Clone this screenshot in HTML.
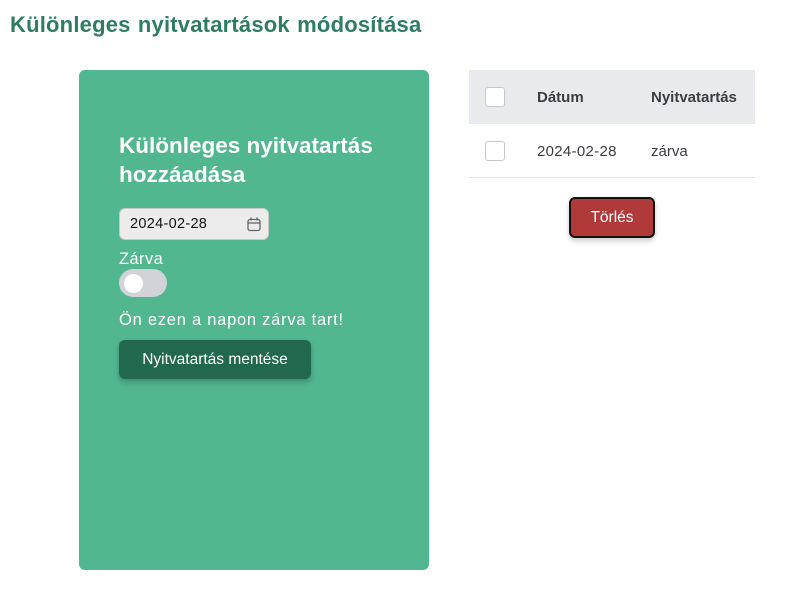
<!DOCTYPE html>
<html><head><style>
body{margin:0;width:797px;height:608px;background:#fff;font-family:"Liberation Sans",sans-serif;position:relative;overflow:hidden}
.abs{position:absolute}
h1{position:absolute;left:10px;top:12px;margin:0;font-size:22px;font-weight:bold;color:#2e7d62;letter-spacing:0.2px;word-spacing:1px;font-weight:600}
.card{left:79px;top:70px;width:350px;height:500px;background:#51b78f;border-radius:6px}
.t{left:119px;top:131px;color:#fff;font-size:22.5px;font-weight:bold;line-height:29px}
.date{left:119px;top:208px;width:150px;height:32px;box-sizing:border-box;background:#ececec;border:1px solid #c8c8c8;border-radius:6px;font-size:14.5px;color:#111;padding:7px 0 0 10px;letter-spacing:0.3px}
.lab{left:119px;top:250px;color:#fff;font-size:16.5px;letter-spacing:0.4px}
.tog{left:119px;top:269px;width:48px;height:28px;border-radius:14px;background:#d1d3d8}
.knob{left:124px;top:274px;width:19px;height:19px;border-radius:50%;background:#fff}
.msg{left:119px;top:311px;color:#fff;font-size:16.5px;letter-spacing:0.75px}
.btn{left:119px;top:340px;width:192px;height:39px;background:#22684f;border-radius:6px;color:#fff;font-size:15.5px;text-align:center;line-height:39px;box-shadow:0 3px 6px rgba(0,0,0,.25)}
.th{left:469px;top:70px;width:286px;height:54px;background:#e8eaed}
.cb{width:18px;height:18px;border:1px solid #c5c9ce;border-radius:3px;background:#fff}
.line{left:469px;top:177px;width:286px;height:1px;background:#e4e6ea}
.tx{font-size:15px;color:#3a3d42}
.del{left:569px;top:197px;width:86px;height:41px;box-sizing:border-box;background:#b03a3a;border:2px solid #111;border-radius:6px;color:#fff;font-size:15.5px;text-align:center;line-height:37px;box-shadow:0 3px 6px rgba(0,0,0,.2)}
</style></head><body>
<h1>Különleges nyitvatartások módosítása</h1>
<div class="abs card"></div>
<div class="abs t">Különleges nyitvatartás<br>hozzáadása</div>
<div class="abs date">2024-02-28
<svg class="abs" style="left:127px;top:8px" width="14" height="15" viewBox="0 0 14 15"><rect x="1" y="2.5" width="12" height="11" rx="2" fill="none" stroke="#666" stroke-width="1.3"/><line x1="1" y1="6" x2="13" y2="6" stroke="#666" stroke-width="1.3"/><line x1="4" y1="0.5" x2="4" y2="3.5" stroke="#666" stroke-width="1.3"/><line x1="10" y1="0.5" x2="10" y2="3.5" stroke="#666" stroke-width="1.3"/></svg></div>
<div class="abs lab">Zárva</div>
<div class="abs tog"></div><div class="abs knob"></div>
<div class="abs msg">Ön ezen a napon zárva tart!</div>
<div class="abs btn">Nyitvatartás mentése</div>
<div class="abs th"></div>
<div class="abs cb" style="left:485px;top:87px"></div>
<div class="abs tx" style="left:537px;top:89px;font-weight:bold">Dátum</div>
<div class="abs tx" style="left:651px;top:89px;font-weight:bold">Nyitvatartás</div>
<div class="abs cb" style="left:485px;top:141px"></div>
<div class="abs tx" style="left:537px;top:143px;letter-spacing:0.3px">2024-02-28</div>
<div class="abs tx" style="left:651px;top:143px">zárva</div>
<div class="abs line"></div>
<div class="abs del">Törlés</div>
</body></html>
